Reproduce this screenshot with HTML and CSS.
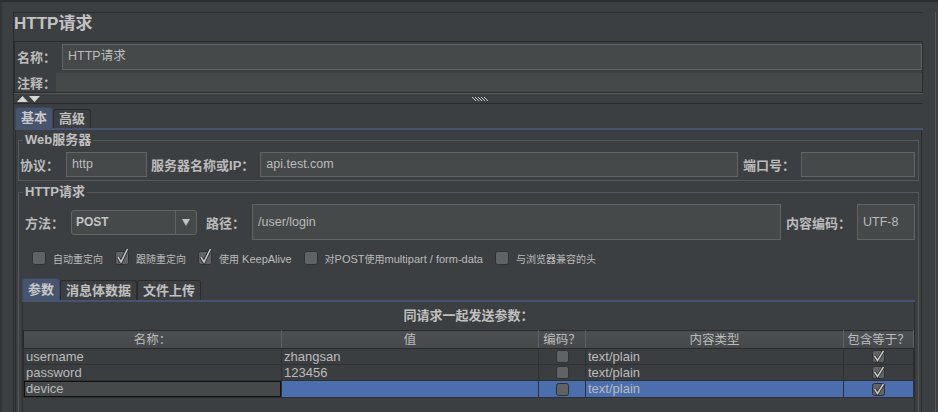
FILE: index.html
```html
<!DOCTYPE html>
<html>
<head>
<meta charset="utf-8">
<link rel="stylesheet" href="styles.css">
</head>
<body>
<div class="window">
  <div class="main">
    <div class="title">HTTP请求</div>
    <div class="namepanel">
      <div class="nrow"><span class="lbl">名称：</span><div class="field namef">HTTP请求</div></div>
      <div class="crow"><span class="lbl">注释：</span><div class="area"></div></div>
    </div>
    <div class="splitter">
      <svg class="arrows" width="24" height="6" viewBox="0 0 24 6"><polygon points="0,6 5.5,0 11,6" fill="#d6d6d6"/><polygon points="12,0 23,0 17.5,6" fill="#d6d6d6"/></svg>
      <svg class="grip" width="16" height="4" viewBox="0 0 16 4"><path d="M0.5 0v1M1.5 1v1M2.5 2v1M3.5 3v1M3.5 0v1M4.5 1v1M5.5 2v1M6.5 3v1M6.5 0v1M7.5 1v1M8.5 2v1M9.5 3v1M9.5 0v1M10.5 1v1M11.5 2v1M12.5 3v1M12.5 0v1M13.5 1v1M14.5 2v1M15.5 3v1" stroke="#d0d0d0" stroke-width="1"/></svg>
    </div>
    <div class="tabstrip">
      <div class="tab sel">基本</div>
      <div class="tab">高级</div>
    </div>
    <div class="tabpanel">
      <fieldset class="group g1">
        <legend>Web服务器</legend>
        <div class="row r1">
          <span class="lbl">协议：</span>
          <div class="field f-proto">http</div>
          <span class="lbl l-server">服务器名称或IP：</span>
          <div class="field f-server">api.test.com</div>
          <span class="lbl l-port">端口号：</span>
          <div class="field f-port"></div>
        </div>
      </fieldset>
      <fieldset class="group g2">
        <legend>HTTP请求</legend>
        <div class="row r2">
          <span class="lbl">方法：</span>
          <div class="combo">
            <span class="cval">POST</span>
            <span class="cbtn"><svg width="8" height="8" viewBox="0 0 8 8"><polygon points="0,1 8,1 4,8" fill="#c0c0c0"/></svg></span>
          </div>
          <span class="lbl l-path">路径：</span>
          <div class="field f-path">/user/login</div>
          <span class="lbl l-enc">内容编码：</span>
          <div class="field f-enc">UTF-8</div>
        </div>
        <div class="checks">
          <div class="ck">
            <svg class="cb" width="14" height="14" viewBox="0 0 14 14"><rect x="0.5" y="0.5" width="13" height="13" rx="2" fill="#606366" stroke="#2f3133"/></svg>
            <span class="ckl"><span class="s">自动重定向</span></span>
          </div>
          <div class="ck">
            <svg class="cb" width="14" height="14" viewBox="0 0 14 14" overflow="visible"><rect x="0.5" y="0.5" width="13" height="13" rx="2" fill="#606366" stroke="#2f3133"/><path d="M3 6 L6 11 L12.5 -2" fill="none" stroke="#2a2a2a" stroke-width="3.4"/><path d="M3 6 L6 11 L12.5 -2" fill="none" stroke="#c4c4c4" stroke-width="1.6"/></svg>
            <span class="ckl"><span class="s">跟随重定向</span></span>
          </div>
          <div class="ck">
            <svg class="cb" width="14" height="14" viewBox="0 0 14 14" overflow="visible"><rect x="0.5" y="0.5" width="13" height="13" rx="2" fill="#606366" stroke="#2f3133"/><path d="M3 6 L6 11 L12.5 -2" fill="none" stroke="#2a2a2a" stroke-width="3.4"/><path d="M3 6 L6 11 L12.5 -2" fill="none" stroke="#c4c4c4" stroke-width="1.6"/></svg>
            <span class="ckl"><span class="s">使用</span> KeepAlive</span>
          </div>
          <div class="ck">
            <svg class="cb" width="14" height="14" viewBox="0 0 14 14"><rect x="0.5" y="0.5" width="13" height="13" rx="2" fill="#606366" stroke="#2f3133"/></svg>
            <span class="ckl"><span class="s">对</span>POST<span class="s">使用</span>multipart / form-data</span>
          </div>
          <div class="ck">
            <svg class="cb" width="14" height="14" viewBox="0 0 14 14"><rect x="0.5" y="0.5" width="13" height="13" rx="2" fill="#606366" stroke="#2f3133"/></svg>
            <span class="ckl"><span class="s">与浏览器兼容的头</span></span>
          </div>
        </div>
        <div class="itabs">
          <div class="tab itab sel">参数</div>
          <div class="tab itab">消息体数据</div>
          <div class="tab itab">文件上传</div>
        </div>
        <div class="ipanel">
          <div class="ptitle">同请求一起发送参数：</div>
          <table class="params">
            <colgroup><col class="c1"><col class="c2"><col class="c3"><col class="c4"><col class="c5"></colgroup>
            <thead>
              <tr><th>名称：</th><th>值</th><th>编码？</th><th>内容类型</th><th>包含等于？</th></tr>
            </thead>
            <tbody>
              <tr>
                <td>username</td><td>zhangsan</td>
                <td class="cc"><svg width="13" height="13" viewBox="0 0 13 13"><rect x="0.5" y="0.5" width="12" height="12" rx="2" fill="#606366" stroke="#2e3032"/></svg></td>
                <td>text/plain</td>
                <td class="cc"><svg width="13" height="13" viewBox="0 0 13 13"><rect x="0.5" y="0.5" width="12" height="12" rx="2" fill="#606366" stroke="#2e3032"/><path d="M2.5 6 L5.5 10.5 L11.5 1" fill="none" stroke="#2a2a2a" stroke-width="3.2"/><path d="M2.5 6 L5.5 10.5 L11.5 1" fill="none" stroke="#c8c8c8" stroke-width="1.5"/></svg></td>
              </tr>
              <tr>
                <td>password</td><td>123456</td>
                <td class="cc"><svg width="13" height="13" viewBox="0 0 13 13"><rect x="0.5" y="0.5" width="12" height="12" rx="2" fill="#606366" stroke="#2e3032"/></svg></td>
                <td>text/plain</td>
                <td class="cc"><svg width="13" height="13" viewBox="0 0 13 13"><rect x="0.5" y="0.5" width="12" height="12" rx="2" fill="#606366" stroke="#2e3032"/><path d="M2.5 6 L5.5 10.5 L11.5 1" fill="none" stroke="#2a2a2a" stroke-width="3.2"/><path d="M2.5 6 L5.5 10.5 L11.5 1" fill="none" stroke="#c8c8c8" stroke-width="1.5"/></svg></td>
              </tr>
              <tr class="selrow">
                <td class="edit"><div class="editor">device</div></td><td></td>
                <td class="cc"><svg width="13" height="13" viewBox="0 0 13 13"><rect x="0.5" y="0.5" width="12" height="12" rx="2" fill="#606366" stroke="#2e3032"/></svg></td>
                <td>text/plain</td>
                <td class="cc"><svg width="13" height="13" viewBox="0 0 13 13"><rect x="0.5" y="0.5" width="12" height="12" rx="2" fill="#606366" stroke="#2e3032"/><path d="M2.5 6 L5.5 10.5 L11.5 1" fill="none" stroke="#2a2a2a" stroke-width="3.2"/><path d="M2.5 6 L5.5 10.5 L11.5 1" fill="none" stroke="#c8c8c8" stroke-width="1.5"/></svg></td>
              </tr>
            </tbody>
          </table>
        </div>
      </fieldset>
    </div>
  </div>
  <div class="rgap"></div>
</div>
</body>
</html>
```

FILE: styles.css
```css
* { box-sizing: border-box; }
html, body { margin: 0; padding: 0; }
body {
  width: 938px;
  height: 412px;
  overflow: hidden;
  background: #3c3f41;
  color: #bbbbbb;
  font-family: "Liberation Sans", "Noto Sans CJK SC", sans-serif;
  font-size: 13px;
}
.window {
  display: flex;
  height: 412px;
  overflow: hidden;
  border-top: 2px solid #2b2d2f;
  padding: 10px 2px 0 13px;
  background: linear-gradient(to right, #333537 0 2px, #3c3f41 2px);
}
.main {
  flex: 0 0 910px;
  display: flex;
  flex-direction: column;
  border-top: 1px solid #2b2b2b;
  border-left: 1px solid #2b2b2b;
  overflow: hidden;
}
.main > * { flex-shrink: 0; }
.rgap {
  flex: 1;
  border-right: 1px solid #55585a;
}
.title {
  height: 28px;
  line-height: 22px;
  font-size: 17px;
  font-weight: bold;
  color: #c2c2c2;
  white-space: nowrap;
}
.lbl {
  flex-shrink: 0;
  font-weight: bold;
  font-size: 13px;
  white-space: nowrap;
  color: #bbbbbb;
}
.field {
  flex-shrink: 0;
  background: #45494a;
  border: 1px solid #646464;
  height: 25px;
  line-height: 23px;
  padding-left: 5px;
  font-size: 12.5px;
  white-space: nowrap;
  color: #bbbbbb;
}
/* name panel */
.namepanel {
  height: 52px;
  border: 1px solid #2b2b2b;
  padding: 1px 0 0 1px;
}
.nrow {
  display: flex;
  align-items: center;
  height: 28px;
  padding: 0 0 1px 1px;
}
.namef {
  flex: 1;
  height: 26px;
  margin-left: 6px;
}
.crow {
  display: flex;
  align-items: center;
  height: 19px;
  margin-top: 2px;
  padding-left: 1px;
}
.area {
  flex: 1;
  height: 19px;
  background: #45494a;
}
/* splitter */
.splitter {
  height: 11px;
  border-top: 1px solid #55585a;
  border-bottom: 1px solid #2b2b2b;
  display: flex;
  align-items: flex-start;
  padding: 2px 0 0 3px;
}
.arrows { display: block; flex-shrink: 0; }
.grip { display: block; flex-shrink: 0; margin: 1px 0 0 431px; }
/* tabs */
.tabstrip {
  display: flex;
  align-items: flex-end;
  height: 26px;
  margin-left: 1px;
  border-bottom: 2px solid #46546e;
}
.tab {
  flex-shrink: 0;
  font-weight: bold;
  font-size: 13px;
  line-height: 18px;
  height: 19px;
  padding: 0 5px;
  border: 1px solid #2b2b2b;
  border-bottom: none;
  border-radius: 3px 3px 0 0;
  white-space: nowrap;
  color: #c0c0c0;
}
.tab.sel {
  height: 21px;
  line-height: 20px;
  background: #46546e;
  border-color: #3b4660;
  color: #c8c8c8;
}
.tabpanel {
  flex: 1 1 auto;
  min-height: 0;
  overflow: hidden;
  margin-left: 1px;
  width: 907px;
  border-left: 1px solid #2b2b2b;
  border-right: 1px solid #2b2b2b;
  padding: 3px 2px 0 2px;
}
/* groups */
.group {
  margin: 0;
  min-width: 0;
  border: 1px solid #55585a;
}
.group legend {
  padding: 0 2px;
  font-weight: bold;
  font-size: 13px;
  line-height: 14px;
  color: #c0c0c0;
}
.g1 {
  padding: 5px 3px 3px 1px;
}
.g1 legend { margin-left: 3px; }
.g2 {
  margin-top: 4px;
  height: 240px;
  padding: 5px 3px 0 3px;
}
.g2 legend { margin-left: 1px; }
.row {
  display: flex;
  align-items: center;
}
.r1 { height: 25px; }
.f-proto { width: 81px; margin-left: 7px; }
.l-server { margin-left: 4px; }
.f-server { flex: 1 1 auto; margin-left: 6px; }
.l-port { margin-left: 5px; }
.f-port { width: 114px; margin-left: 6px; }
.r2 { height: 36px; padding-left: 3px; }
.combo {
  flex-shrink: 0;
  display: flex;
  width: 126px;
  height: 25px;
  margin-left: 7px;
  background: #45494a;
  border: 1px solid #646464;
  border-radius: 3px;
}
.cval {
  flex: 1;
  padding-left: 4px;
  line-height: 22px;
  font-weight: bold;
  font-size: 12px;
  color: #c4c4c4;
}
.cbtn {
  width: 21px;
  border-left: 1px solid #646464;
  display: flex;
  align-items: center;
  justify-content: center;
}
.cbtn svg { display: block; }
.l-path { margin-left: 9px; }
.f-path { flex: 1 1 auto; height: 36px; line-height: 34px; margin-left: 7px; }
.l-enc { margin-left: 5px; }
.f-enc { width: 58px; height: 36px; line-height: 34px; margin-left: 6px; }
/* checkboxes */
.checks {
  display: flex;
  align-items: center;
  gap: 12px;
  height: 16px;
  margin-top: 10px;
  padding-left: 10px;
}
.ck {
  flex-shrink: 0;
  display: flex;
  align-items: center;
  gap: 7px;
  font-size: 11px;
  color: #bbbbbb;
  white-space: nowrap;
}
.ck .s { font-size: 10px; }
.cb { display: block; flex-shrink: 0; }
/* inner tabs */
.itabs {
  display: flex;
  align-items: flex-end;
  height: 24px;
  margin-top: 12px;
  border-bottom: 2px solid #46546e;
}
.itab { height: 20px; line-height: 19px; }
.itab.sel { height: 22px; line-height: 21px; }
.ipanel {
  border-left: 1px solid #2b2b2b;
  border-right: 1px solid #2b2b2b;
  height: 120px;
}
.ptitle {
  height: 28px;
  line-height: 28px;
  text-align: center;
  font-weight: bold;
  font-size: 13px;
  color: #c0c0c0;
}
/* table */
.params {
  border-collapse: collapse;
  table-layout: fixed;
  width: 890px;
}
.c1 { width: 258px; }
.c2 { width: 257px; }
.c3 { width: 47px; }
.c4 { width: 258px; }
.c5 { width: 70px; }
.params th {
  height: 18px;
  padding: 0;
  font-weight: normal;
  font-size: 12.5px;
  line-height: 16px;
  color: #bbbbbb;
  background: linear-gradient(#4d5053, #45484a);
  border-top: 1px solid #2b2b2b;
  border-bottom: 1px solid #2b2b2b;
  border-left: 1px solid #2b2b2b;
  border-right: 1px solid #5d6062;
  white-space: nowrap;
}
.params td {
  height: 16px;
  padding: 0 0 0 2px;
  font-size: 13px;
  line-height: 14px;
  color: #bbbbbb;
  border: 1px solid #2e3032;
  background: #3b3e40;
  white-space: nowrap;
  overflow: hidden;
}
.params td.cc {
  padding: 0;
  text-align: center;
}
.params td.cc svg { display: block; margin: 0 auto; }
.params .selrow td { background: #4b6eaf; }
.params td.edit { padding: 0; }
.editor {
  height: 16px;
  line-height: 14px;
  padding-left: 1px;
  background: #45494a;
  border: 1px solid #111111;
}
```
